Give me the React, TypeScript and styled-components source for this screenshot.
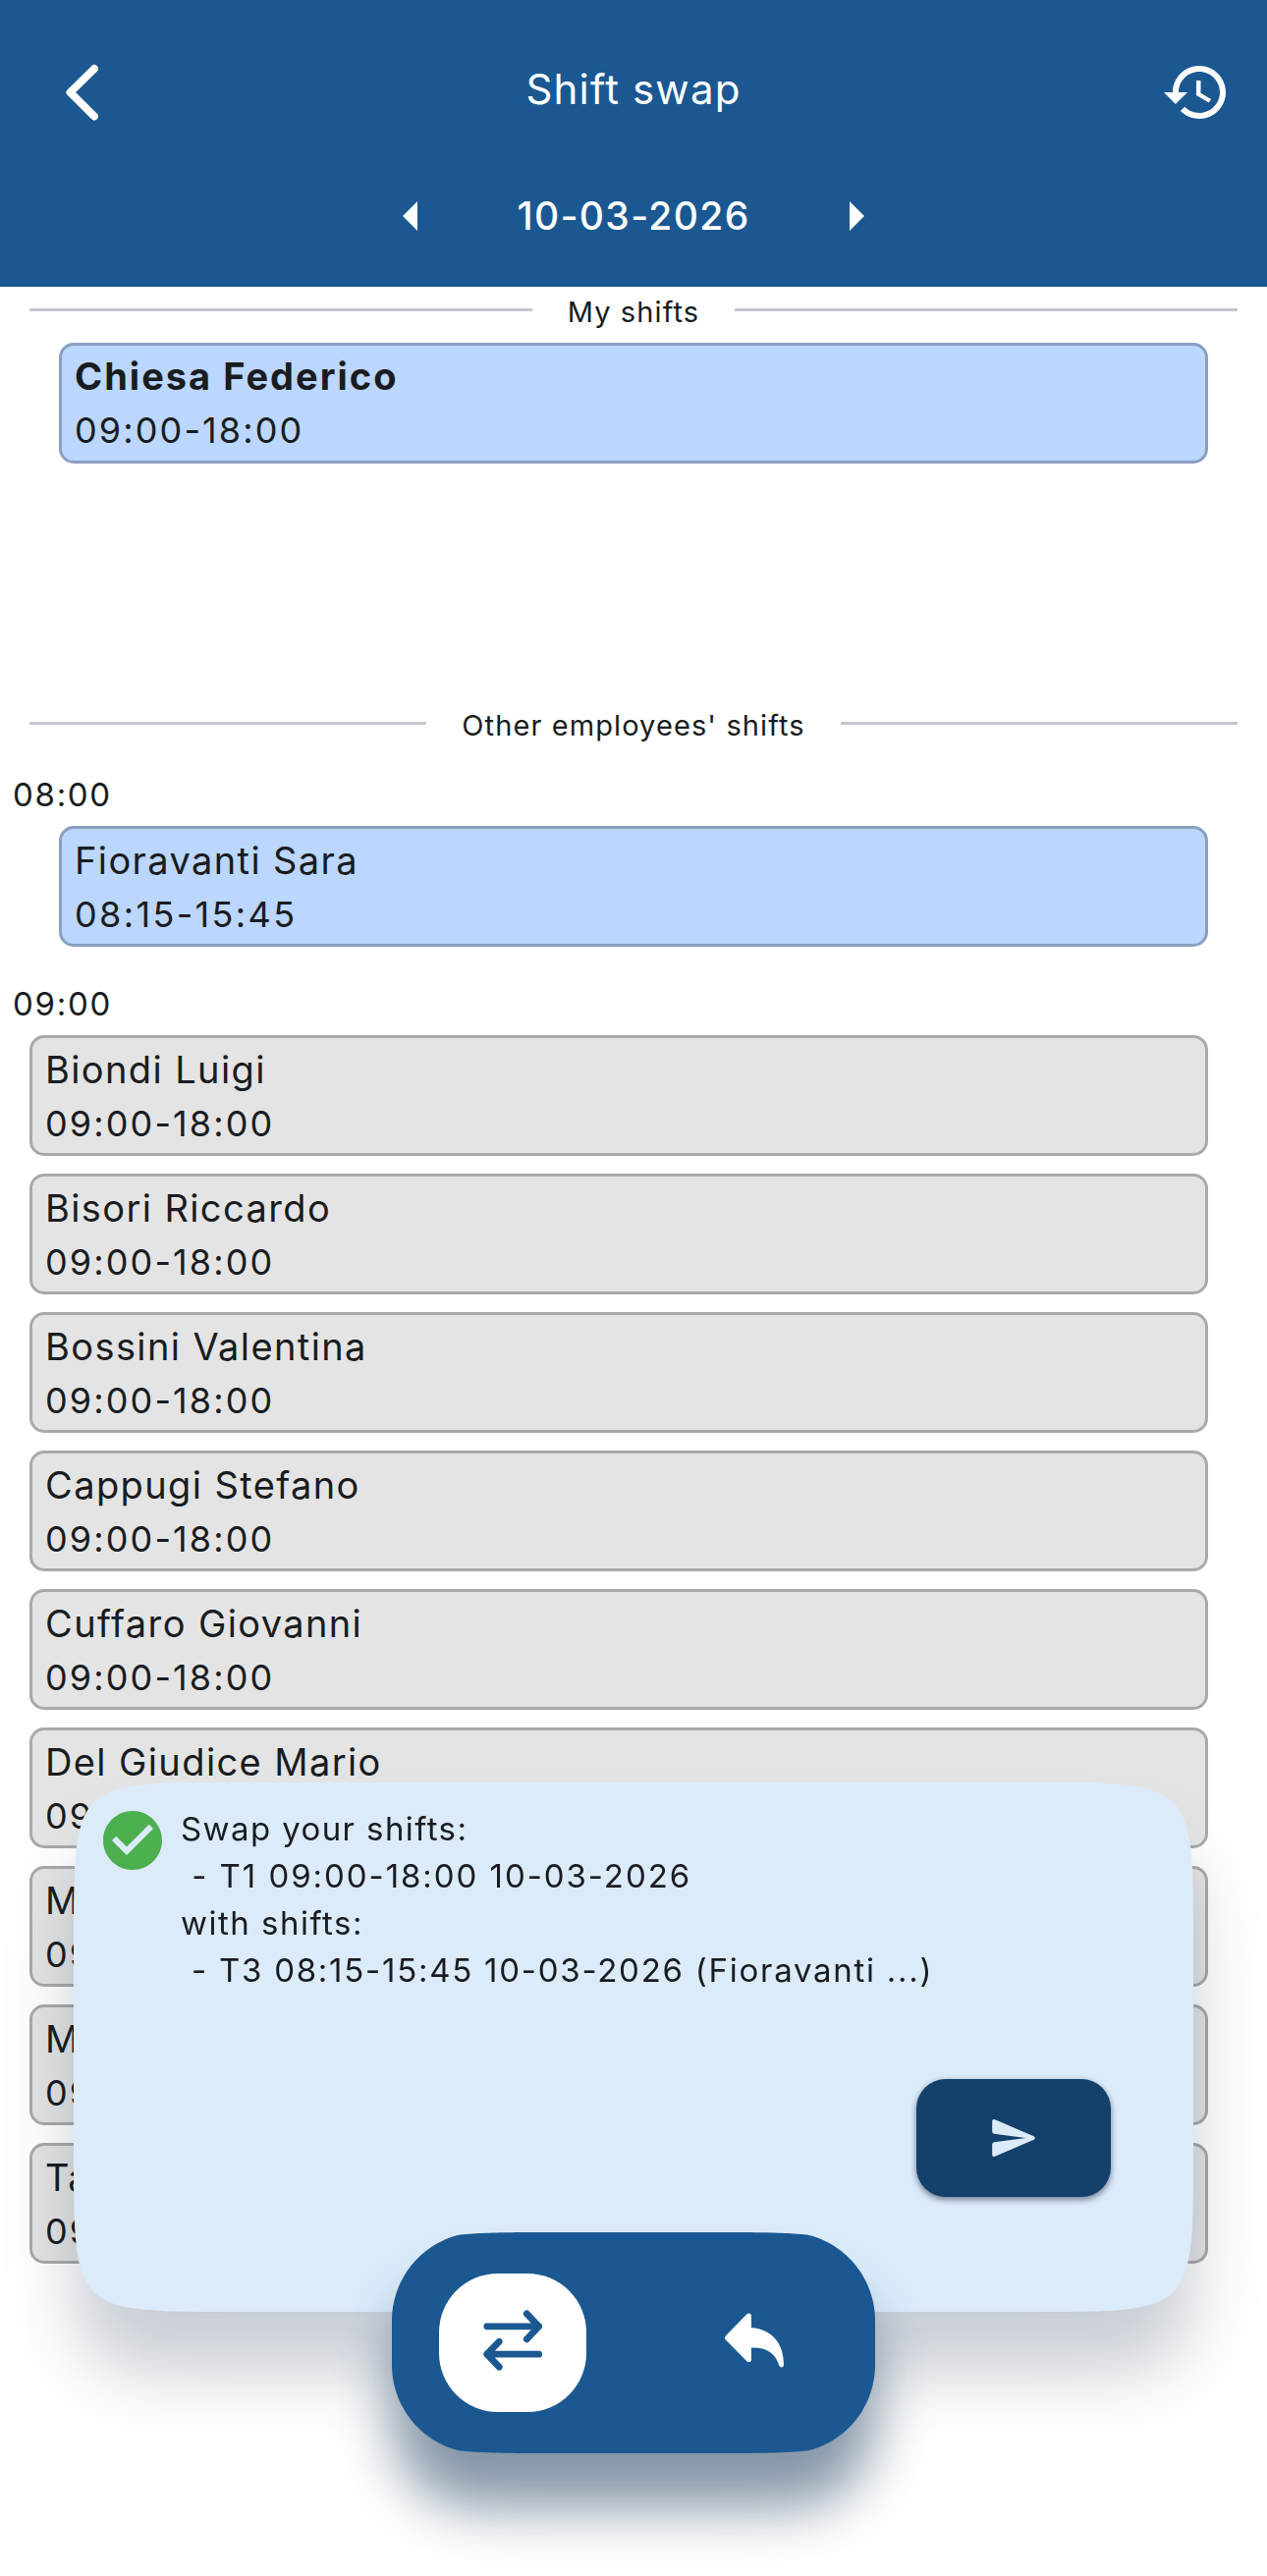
import React from "react";
import styled, { createGlobalStyle, css } from "styled-components";

const color = {
  primary: "#1b5891",
  primaryDark: "#14416b",
  panel: "#dcebfa",
  ink: "#191c20",
  line: "#c3c6d0",
  mineFill: "#bbd6ff",
  mineBorder: "#8a9fc0",
  otherFill: "#e4e4e4",
  otherBorder: "#a9a9a9",
  ok: "#4caf50",
};

/* Outline of a continuous-corner rectangle, optionally cut by a round one. */
function continuousOutline(w: number, h: number, r: number, round = 0): string {
  const corner: [number, number][] = [];
  const steps = 96;
  for (let i = 0; i <= steps; i++) {
    const u = i / steps;
    const y = Math.min(r * u * u * u, h / 2);
    /* where the corners above and below overlap, the side stays straight */
    const smooth = y > h - r ? 0 : r * Math.pow(1 - Math.cbrt(y / r), 3);
    const arc = y < round ? round - Math.sqrt(round * round - (round - y) ** 2) : 0;
    corner.push([Math.max(smooth, arc), y]);
  }
  const f = (x: number, y: number) => `${x.toFixed(2)}px ${y.toFixed(2)}px`;
  const down = corner;
  const up = [...corner].reverse();
  return [
    ...up.map(([x, y]) => f(x, y)),
    ...down.map(([x, y]) => f(w - x, y)),
    ...up.map(([x, y]) => f(w - x, h - y)),
    ...down.map(([x, y]) => f(x, h - y)),
  ].join(", ");
}

const Global = createGlobalStyle`
  *, *::before, *::after { box-sizing: border-box; }
  body { margin: 0; background: #fff; }
  button { border: 0; padding: 0; margin: 0; background: none; color: inherit; font: inherit; }
  svg { display: block; overflow: visible; }
`;

const Screen = styled.div`
  position: relative;
  width: 1290px;
  height: 2623px;
  overflow: hidden;
  background: #fff;
  color: ${color.ink};
  font-family: Inter, Roboto, sans-serif;
  font-weight: 400;
`;

const Header = styled.header`
  height: 292px;
  padding: 58px 36px 0 36px;
  display: flex;
  flex-direction: column;
  gap: 54px;
  background: ${color.primary};
  color: #fff;
`;

const TitleBar = styled.div`
  height: 72px;
  display: grid;
  grid-template-columns: 1fr auto 1fr;
  align-items: center;
`;

const Title = styled.h1`
  margin: 0 0 6px;
  font-size: 42px;
  font-weight: 400;
  line-height: 60px;
  letter-spacing: 1.16px;
`;

const IconButton = styled.button<{ $end?: boolean }>`
  width: 72px;
  height: 72px;
  ${(p) => (p.$end ? css`justify-self: end;` : css`margin-left: 12px;`)}
`;

const DateBar = styled.div`
  height: 72px;
  display: flex;
  justify-content: center;
  align-items: center;
`;

const StepButton = styled.button`
  width: 72px;
  height: 72px;
`;

const DateText = styled.div`
  width: 380px;
  text-align: center;
  font-size: 39px;
  font-weight: 500;
  line-height: 72px;
  letter-spacing: 1.34px;
`;

const MySection = styled.section`
  height: 421px;
`;

const DividerRow = styled.div`
  height: 51px;
  padding: 0 30px;
  display: flex;
  align-items: center;
  gap: 36px;
  font-size: 29px;
  letter-spacing: 1.1px;
  &::before,
  &::after {
    content: "";
    flex: 1;
    height: 3px;
    margin-bottom: 4px;
    background: ${color.line};
  }
`;

const MyList = styled.div`
  padding: 6px 60px 0;
`;

const Groups = styled.div`
  padding-top: 13px;
  display: flex;
  flex-direction: column;
  gap: 26px;
`;

const HourLabel = styled.div`
  height: 64px;
  padding-left: 13px;
  font-size: 33px;
  line-height: 64px;
  letter-spacing: 1.7px;
`;

const Card = styled.article<{ $mine?: boolean; $indent?: number }>`
  height: 123px;
  padding: 4px 13px 0;
  margin-left: ${(p) => p.$indent ?? 0}px;
  border: 3px solid ${(p) => (p.$mine ? color.mineBorder : color.otherBorder)};
  border-radius: 15px;
  background: ${(p) => (p.$mine ? color.mineFill : color.otherFill)};
  white-space: nowrap;
`;

const CardList = styled.div`
  display: flex;
  flex-direction: column;
  gap: 18px;
  padding-right: 60px;
  ${Card} {
    padding-top: 5px;
  }
`;

const Name = styled.div<{ $bold?: boolean }>`
  font-size: 38px;
  line-height: 55px;
  font-weight: ${(p) => (p.$bold ? 700 : 400)};
  letter-spacing: ${(p) => (p.$bold ? 2.02 : 1.39)}px;
`;

const Time = styled.div<{ $tracking?: number }>`
  font-size: 36px;
  line-height: 54px;
  letter-spacing: ${(p) => p.$tracking ?? 2.12}px;
`;

const PanelShadow = styled.div`
  position: absolute;
  left: 75px;
  top: 1815px;
  filter: drop-shadow(0 62px 34px rgba(0, 28, 62, 0.21));
`;

const Panel = styled.section`
  width: 1140px;
  height: 539px;
  padding: 23px 84px 117px 24px;
  display: flex;
  flex-direction: column;
  justify-content: space-between;
  background: ${color.panel};
  clip-path: polygon(${continuousOutline(1140, 539, 163)});
`;

const Summary = styled.div`
  display: flex;
  gap: 12px;
`;

const Message = styled.div`
  padding-left: 1px;
  white-space: pre;
  font-size: 33px;
  line-height: 48px;
`;

const Line = styled.div<{ $tracking: number }>`
  letter-spacing: ${(p) => p.$tracking}px;
`;

const SendButton = styled.button`
  align-self: flex-end;
  width: 198px;
  height: 120px;
  display: flex;
  align-items: center;
  justify-content: center;
  border-radius: 30px;
  background: ${color.primaryDark};
  color: ${color.panel};
  box-shadow: 0 3px 6px rgba(0, 20, 50, 0.45), 0 1px 6px rgba(0, 20, 50, 0.1);
`;

const PillShadow = styled.div`
  position: absolute;
  left: 399px;
  top: 2273px;
  filter: drop-shadow(0 56px 28px rgba(0, 36, 73, 0.48));
`;

const Pill = styled.nav`
  width: 492px;
  height: 225px;
  padding: 0 48px;
  display: flex;
  align-items: center;
  justify-content: space-between;
  background: ${color.primary};
  clip-path: polygon(${continuousOutline(492, 225, 165, 90)});
`;

const PillButton = styled.button<{ $active?: boolean }>`
  width: 150px;
  height: 141px;
  padding-bottom: 5px;
  display: flex;
  align-items: center;
  justify-content: center;
  border-radius: 60px;
  background: ${(p) => (p.$active ? "#fff" : "transparent")};
  color: ${(p) => (p.$active ? color.primary : "#fff")};
`;

const BackIcon = () => (
  <svg width="72" height="72" viewBox="0 0 72 72" fill="none" stroke="currentColor" strokeWidth="8" strokeLinecap="round" strokeLinejoin="round">
    <path d="M48 12 23.5 36 48 60.5" />
  </svg>
);

const HistoryIcon = () => (
  <svg width="72" height="72" viewBox="0 0 24 24" fill="currentColor">
    <path d="M13 3c-4.97 0-9 4.03-9 9H1l3.89 3.89.07.14L9 12H6c0-3.87 3.13-7 7-7s7 3.13 7 7-3.13 7-7 7c-1.93 0-3.68-.79-4.94-2.06l-1.42 1.42C8.27 19.99 10.51 21 13 21c4.97 0 9-4.03 9-9s-4.03-9-9-9zm-1 5v5l4.28 2.54.72-1.21-3.5-2.08V8H12z" />
  </svg>
);

const ArrowIcon = ({ right }: { right?: boolean }) => (
  <svg width="72" height="72" viewBox="0 0 24 24" fill="currentColor">
    <path d={right ? "M10 17l5-5-5-5v10z" : "M14 7l-5 5 5 5V7z"} />
  </svg>
);

const CheckIcon = () => (
  <svg width="72" height="72" viewBox="0 0 24 24" fill={color.ok}>
    <path d="M12 2C6.48 2 2 6.48 2 12s4.48 10 10 10 10-4.48 10-10S17.52 2 12 2zm-2 15l-5-5 1.41-1.41L10 14.17l7.59-7.59L19 8l-9 9z" />
  </svg>
);

const SendIcon = () => (
  <svg width="46" height="40" viewBox="0 0 46 40" fill="currentColor">
    <path d="M4 1.2 43.6 18.2Q46 20 43.6 21.8L4 38.8Q1.2 39.6 1.2 37V26.4Q1.2 24.5 3.2 24.2L35.5 20 3.2 15.8Q1.2 15.5 1.2 13.6V3Q1.2.4 4 1.2Z" />
  </svg>
);

const SwapIcon = () => (
  <svg width="66" height="60" viewBox="0 0 66 60" fill="none" stroke="currentColor" strokeWidth="6.8" strokeLinecap="round" strokeLinejoin="round">
    <path d="M6.8 15.8H59.6M47.3 2.9 59.6 15.8 47.3 28.8" />
    <path d="M59.6 44.2H6.8M19.2 31.3 6.8 44.2 19.2 57.2" />
  </svg>
);

const ReplyIcon = () => (
  <svg width="62" height="58" viewBox="0 0 62 58" fill="currentColor">
    <path d="M1.8 24.5Q.2 26.5 1.8 28.5L23.5 50.5C25 52 28 51.3 28 48.8V36.5C43 36 52.5 42 56 54C57 57.5 61 57 61 54C61 31 48 17.5 28 16.3V4C28 1.5 25 .8 23.5 2.3Z" />
  </svg>
);

const FULL_DAY = "09:00-18:00";
const nineOClock = [
  "Biondi Luigi",
  "Bisori Riccardo",
  "Bossini Valentina",
  "Cappugi Stefano",
  "Cuffaro Giovanni",
  "Del Giudice Mario",
  "M",
  "M",
  "Ta",
];

export default function App() {
  return (
    <>
      <Global />
      <Screen>
        <Header>
          <TitleBar>
            <IconButton aria-label="Back"><BackIcon /></IconButton>
            <Title>Shift swap</Title>
            <IconButton $end aria-label="History"><HistoryIcon /></IconButton>
          </TitleBar>
          <DateBar>
            <StepButton aria-label="Previous day"><ArrowIcon /></StepButton>
            <DateText>10-03-2026</DateText>
            <StepButton aria-label="Next day"><ArrowIcon right /></StepButton>
          </DateBar>
        </Header>

        <MySection>
          <DividerRow>My shifts</DividerRow>
          <MyList>
            <Card $mine>
              <Name $bold>Chiesa Federico</Name>
              <Time>{FULL_DAY}</Time>
            </Card>
          </MyList>
        </MySection>

        <section>
          <DividerRow>Other employees' shifts</DividerRow>
          <Groups>
            <div>
              <HourLabel>08:00</HourLabel>
              <CardList>
                <Card $mine $indent={60}>
                  <Name>Fioravanti Sara</Name>
                  <Time $tracking={2.36}>08:15-15:45</Time>
                </Card>
              </CardList>
            </div>
            <div>
              <HourLabel>09:00</HourLabel>
              <CardList>
                {nineOClock.map((name, i) => (
                  <Card key={i} $indent={30}>
                    <Name>{name}</Name>
                    <Time>{FULL_DAY}</Time>
                  </Card>
                ))}
              </CardList>
            </div>
          </Groups>
        </section>

        <PanelShadow>
          <Panel>
            <Summary>
              <CheckIcon />
              <Message>
                <Line $tracking={1.4}>Swap your shifts:</Line>
                <Line $tracking={1.94}>{" - T1 09:00-18:00 10-03-2026"}</Line>
                <Line $tracking={1.5}>with shifts:</Line>
                <Line $tracking={1.74}>{" - T3 08:15-15:45 10-03-2026 (Fioravanti ...)"}</Line>
              </Message>
            </Summary>
            <SendButton aria-label="Send"><SendIcon /></SendButton>
          </Panel>
        </PanelShadow>

        <PillShadow>
          <Pill>
            <PillButton $active aria-label="Swap"><SwapIcon /></PillButton>
            <PillButton aria-label="Reply"><ReplyIcon /></PillButton>
          </Pill>
        </PillShadow>
      </Screen>
    </>
  );
}
